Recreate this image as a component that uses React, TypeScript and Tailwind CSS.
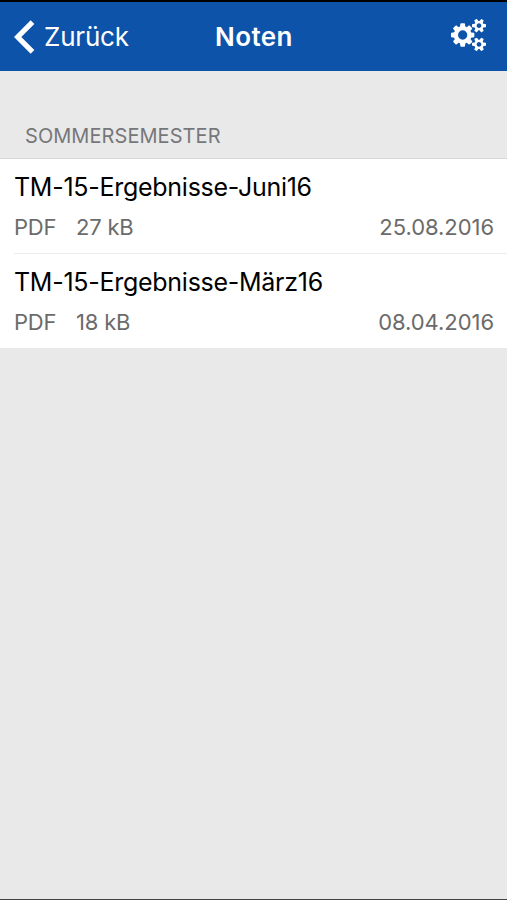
const grades = [
  { name: "TM-15-Ergebnisse-Juni16", type: "PDF", size: "27 kB", date: "25.08.2016" },
  { name: "TM-15-Ergebnisse-März16", type: "PDF", size: "18 kB", date: "08.04.2016" },
];

const smallGear =
  "M1664 1408q0-52-38-90t-90-38-90 38-38 90q0 53 37.5 90.5t90.5 37.5 90.5-37.5 37.5-90.5zm256-70v140q0 16-149 31-12 27-30 52 51 113 51 138 0 4-4 7-122 71-124 71-8 0-46-47t-52-68q-20 2-30 2t-30-2q-14 21-52 68t-46 47q-2 0-124-71-4-3-4-7 0-25 51-138-18-25-30-52-149-15-149-31v-140q0-16 149-31 13-29 30-52-51-113-51-138 0-4 4-7 4-2 35-20t59-34 30-16q8 0 46 46.5t52 67.5q20-2 30-2t30 2q51-71 92-112l6-2q4 0 124 70 4 3 4 7 0 25-51 138 17 23 30 52 149 15 149 31z";

function CogsIcon() {
  return (
    <svg className="mr-[21px] mb-1 justify-self-end" width="35" height="32" viewBox="0 20 1920 1752" fill="currentColor">
      <path d="M896 896q0-106-75-181t-181-75-181 75-75 181 75 181 181 75 181-75 75-181zm384-91v185q0 10-7 19.5t-16 10.5l-155 24q-11 35-32 76 34 48 90 115 7 11 7 20 0 12-7 19-23 30-82.5 89.5t-78.5 59.5q-11 0-21-7l-115-90q-37 19-77 31-11 108-23 155-7 24-30 24h-186q-11 0-20-7.5t-10-17.5l-23-153q-34-10-75-31l-118 89q-7 7-20 7-11 0-21-8-144-133-144-160 0-9 7-19 10-14 41-53t47-61q-23-44-35-82l-152-24q-10-1-17-9.5t-7-19.5v-185q0-10 7-19.5t16-10.5l155-24q11-35 32-76-34-48-90-115-7-11-7-20 0-12 7-20 22-30 82-89t79-59q11 0 21 7l115 90q34-18 77-32 11-108 23-154 7-24 30-24h186q11 0 20 7.5t10 17.5l23 153q34 10 75 31l118-89q8-7 20-7 11 0 21 8 144 133 144 160 0 8-7 19-12 16-42 54t-45 60q23 48 34 82l152 23q10 2 17 10.5t7 19.5z" />
      <path d={smallGear} />
      <path d={smallGear} transform="translate(0 -1024)" />
    </svg>
  );
}

function Header() {
  return (
    <header className="grid h-[71px] grid-cols-3 items-center border-t-2 border-black bg-[#0d53a9] text-white">
      <button className="flex items-center gap-[9px] pl-[14px] text-[26px] leading-8 tracking-[-0.2px]">
        <svg width="21" height="34" viewBox="0 0 21 34" fill="none" stroke="currentColor" strokeWidth="5.2">
          <path d="M18.5 2.2 3.7 17l14.8 14.8" />
        </svg>
        Zurück
      </button>
      <h1 className="pl-px text-center text-[26px] leading-8 font-semibold tracking-[0.4px]">Noten</h1>
      <CogsIcon />
    </header>
  );
}

export default function App() {
  return (
    <div className="flex h-[900px] w-[507px] flex-col border-b border-[#444444] bg-[#e9e9e9] font-['Inter',sans-serif]">
      <Header />
      <h2 className="h-[88px] border-b border-[#d6d6d6] pt-[51px] pl-[25px] text-[20px] leading-7 tracking-[0.06px] text-[#77777a]">
        SOMMERSEMESTER
      </h2>
      <ul className="divide-y divide-[#ececec] bg-white pl-[14px]">
        {grades.map((grade) => (
          <li key={grade.name} className="h-[94.5px] pt-3 pr-[13px]">
            <div className="text-[25px] leading-8 tracking-[-0.27px] text-black">{grade.name}</div>
            <div className="mt-2 flex text-[22px] leading-8 tracking-[-0.2px] text-[#6b6b6b]">
              <span className="w-[62px]">{grade.type}</span>
              <span>{grade.size}</span>
              <span className="ml-auto tracking-[-0.05px]">{grade.date}</span>
            </div>
          </li>
        ))}
      </ul>
    </div>
  );
}
